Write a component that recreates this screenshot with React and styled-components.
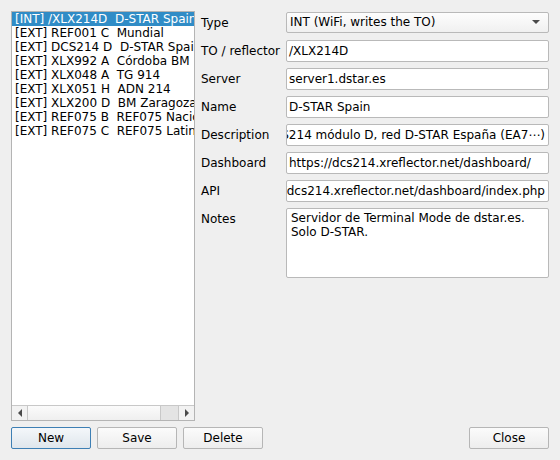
import React from 'react';
import styled, { createGlobalStyle } from 'styled-components';

const Global = createGlobalStyle`
  html, body {
    margin: 0;
    padding: 0;
    background: #efefef;
  }
  body {
    font-family: "DejaVu Sans", "Liberation Sans", sans-serif;
    font-size: 12px;
    color: #000;
  }
`;

const Dialog = styled.div`
  width: 560px;
  height: 460px;
  box-sizing: border-box;
  padding: 11px;
  display: flex;
  flex-direction: column;
  gap: 6px;
  background: #efefef;
`;

const Main = styled.div`
  display: flex;
  gap: 6px;
  height: 410px;
`;

const ListBox = styled.div`
  width: 184px;
  box-sizing: border-box;
  border: 1px solid #b4b4b4;
  background: #fff;
  display: flex;
  flex-direction: column;
`;

const Items = styled.div`
  flex: 1;
  overflow: hidden;
`;

const Item = styled.div`
  height: 14px;
  line-height: 14px;
  padding-left: 3px;
  white-space: pre;
  overflow: hidden;
  background: ${p => (p.$selected ? '#308cc6' : 'transparent')};
  color: ${p => (p.$selected ? '#fff' : '#000')};
`;

const HScroll = styled.div`
  height: 14px;
  display: flex;
  border-top: 1px solid #c8c8c8;
  background: #e6e6e6;
`;

const Arrow = styled.div`
  width: 15px;
  display: flex;
  align-items: center;
  justify-content: center;
  background: #f2f2f2;
  border-left: ${p => (p.$right ? '1px solid #c8c8c8' : 'none')};
  border-right: ${p => (p.$right ? 'none' : '1px solid #c8c8c8')};
`;

const Handle = styled.div`
  width: 133px;
  box-sizing: border-box;
  background: linear-gradient(#fbfbfb, #efefef);
  border-right: 1px solid #c8c8c8;
`;

const Track = styled.div`
  flex: 1;
  background: #e4e4e4;
`;

const Form = styled.div`
  display: grid;
  grid-template-columns: 85px 263px;
  grid-auto-rows: 22px;
  row-gap: 6px;
  padding-top: 1px;
  align-content: start;
`;

const Label = styled.div`
  line-height: 22px;
  white-space: nowrap;
`;

const Field = styled.div`
  box-sizing: border-box;
  height: 22px;
  border: 1px solid #b9b9b9;
  border-radius: 2px;
  background: #fff;
  padding: 0 3px 0 2px;
  line-height: 20px;
  white-space: pre;
  overflow: hidden;
  display: flex;
  justify-content: ${p => (p.$end ? 'flex-end' : 'flex-start')};
`;

const Combo = styled(Field)`
  height: 21px;
  line-height: 19px;
  padding: 0 8px 0 3px;
  background: linear-gradient(#fdfdfd, #f0f0f0);
  justify-content: space-between;
  align-items: center;
`;

const Notes = styled.div`
  grid-row: span 3;
  height: 70px;
  box-sizing: border-box;
  border: 1px solid #b9b9b9;
  border-radius: 2px;
  background: #fff;
  padding: 2px 4px;
  line-height: 14px;
`;

const Buttons = styled.div`
  display: flex;
  gap: 6px;
  height: 22px;
`;

const Button = styled.button`
  width: 80px;
  height: 22px;
  box-sizing: border-box;
  font-family: inherit;
  font-size: 12px;
  color: #000;
  border-radius: 2px;
  padding: 0;
  border: 1px solid ${p => (p.$default ? '#3d7fb4' : '#b6b6b6')};
  background: ${p =>
    p.$default
      ? 'linear-gradient(#f4f7fa, #dfe6ec)'
      : 'linear-gradient(#fbfbfb, #ededed)'};
`;

const Spacer = styled.div`
  flex: 1;
`;

const items = [
  '[INT] /XLX214D  D-STAR Spain',
  '[EXT] REF001 C  Mundial',
  '[EXT] DCS214 D  D-STAR Spain',
  '[EXT] XLX992 A  Córdoba BM',
  '[EXT] XLX048 A  TG 914',
  '[EXT] XLX051 H  ADN 214',
  '[EXT] XLX200 D  BM Zaragoza',
  '[EXT] REF075 B  REF075 Nacional',
  '[EXT] REF075 C  REF075 Latino',
];

const Tri = ({ dir }) => {
  const pts = {
    left: '5,0 5,8 1,4',
    right: '1,0 1,8 5,4',
    down: '0,0 8,0 4,4',
  }[dir];
  const w = dir === 'down' ? 8 : 6;
  const h = dir === 'down' ? 5 : 8;
  return (
    <svg width={w} height={h} viewBox={`0 0 ${w} ${h}`}>
      <polygon points={pts} fill="#4a4a4a" />
    </svg>
  );
};

export default function App() {
  return (
    <>
      <Global />
      <Dialog>
        <Main>
          <ListBox>
            <Items>
              {items.map((t, i) => (
                <Item key={t} $selected={i === 0}>
                  {t}
                </Item>
              ))}
            </Items>
            <HScroll>
              <Arrow>
                <Tri dir="left" />
              </Arrow>
              <Handle />
              <Track />
              <Arrow $right>
                <Tri dir="right" />
              </Arrow>
            </HScroll>
          </ListBox>
          <Form>
            <Label>Type</Label>
            <Combo>
              <span>INT (WiFi, writes the TO)</span>
              <Tri dir="down" />
            </Combo>
            <Label>TO / reflector</Label>
            <Field>/XLX214D</Field>
            <Label>Server</Label>
            <Field>server1.dstar.es</Field>
            <Label>Name</Label>
            <Field>D-STAR Spain</Field>
            <Label>Description</Label>
            <Field $end>Reflector DCS214 módulo D, red D-STAR España (EA7⋯)</Field>
            <Label>Dashboard</Label>
            <Field>https://dcs214.xreflector.net/dashboard/</Field>
            <Label>API</Label>
            <Field $end>https://dcs214.xreflector.net/dashboard/index.php</Field>
            <Label>Notes</Label>
            <Notes>
              Servidor de Terminal Mode de dstar.es.
              <br />
              Solo D-STAR.
            </Notes>
          </Form>
        </Main>
        <Buttons>
          <Button $default>New</Button>
          <Button>Save</Button>
          <Button>Delete</Button>
          <Spacer />
          <Button>Close</Button>
        </Buttons>
      </Dialog>
    </>
  );
}
